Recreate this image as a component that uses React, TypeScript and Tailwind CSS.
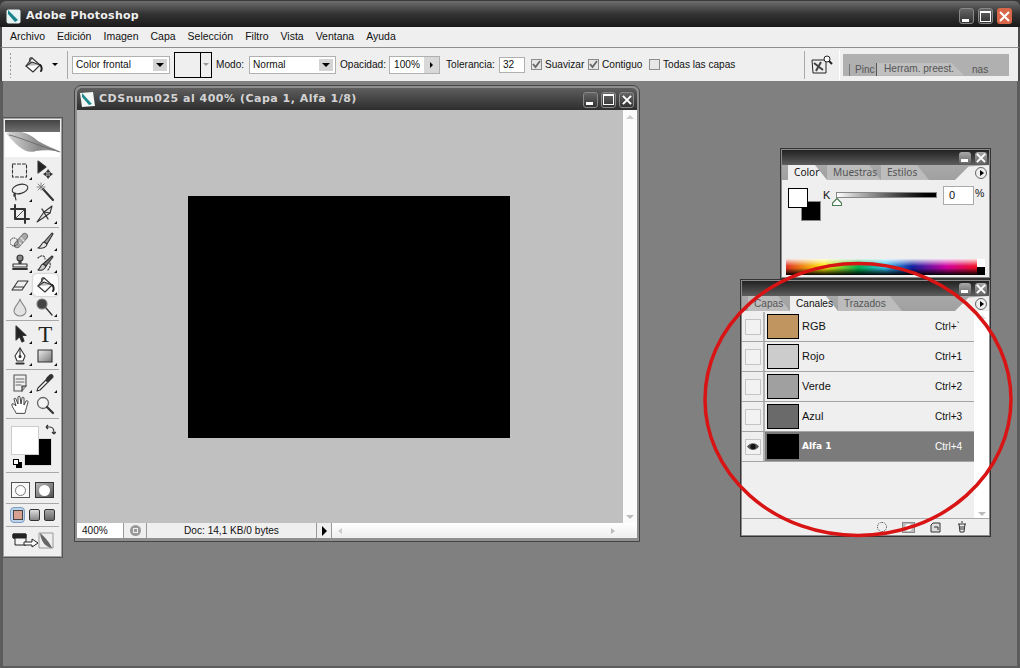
import React from "react";

const F = "font-['Liberation_Sans',Arial,sans-serif]";
const B = "font-['DejaVu_Sans',Verdana,sans-serif] font-bold";

const Ic = ({ children, s = 20 }: { children: React.ReactNode; s?: number }) => (
  <svg width={s} height={s} viewBox="0 0 20 20" fill="none" stroke="#333" strokeWidth="1.1" strokeLinejoin="round" strokeLinecap="round">
    {children}
  </svg>
);

const Bucket = () => (
  <>
    <path d="M9 3 L17 10 L10 17 L3 11 Z" fill="#fff" />
    <path d="M3 11 L9 7 L17 10" fill="#bbb" />
    <path d="M9 3 C7 2 6 4 7 7" />
    <path d="M17 10 C19 11 19 15 18 16" stroke="#222" strokeWidth="2" />
  </>
);

const icons: Record<string, React.ReactNode> = {
  marquee: <rect x="2.5" y="4" width="14" height="13" strokeDasharray="3 2" />,
  move: (
    <>
      <path d="M3 1 V13 L11 7 Z" fill="#222" />
      <path d="M13 10 V18 M9 14 H17 M13 10 l-1.5 2 h3 Z M13 18 l-1.5 -2 h3 Z M9 14 l2 -1.5 v3 Z M17 14 l-2 -1.5 v3 Z" fill="#222" strokeWidth="0.8" />
    </>
  ),
  lasso: (
    <>
      <ellipse cx="10" cy="7" rx="8" ry="4.5" transform="rotate(-15 10 7)" />
      <path d="M5 11 C3 13 4 15 5 14 C6 13 5 12 4 12 M5 14 L6 18" />
    </>
  ),
  wand: (
    <>
      <path d="M8 7 L18 18" strokeWidth="2.2" stroke="#333" />
      <path d="M6 1 V8 M2 5 H10 M3 2 L9 8 M9 2 L3 8" stroke="#777" strokeWidth="0.9" />
    </>
  ),
  crop: (
    <>
      <path d="M5 1 V15 H19 M1 5 H15 V19" strokeWidth="2" stroke="#333" />
      <path d="M6 14 L14 6" strokeWidth="0.9" />
    </>
  ),
  slice: (
    <>
      <path d="M2 18 L9 8 L17 2 L15 9 L8 14 Z" fill="#e6e6e6" />
      <path d="M9 8 L15 9" />
      <path d="M7 5 L13 15" strokeWidth="1.3" />
    </>
  ),
  heal: (
    <>
      <path d="M5 13 L13 4 C15 2 19 5 17 8 L9 17 C6 19 3 16 5 13 Z" fill="#aaa" transform="translate(0 -1)" stroke="#777" />
      <path d="M8 10 l1 1 M11 7 l1 1 M10 12 l1 1 M13 9 l1 1" stroke="#eee" />
      <circle cx="4" cy="11" r="4" strokeDasharray="1 1.3" strokeWidth="0.9" />
    </>
  ),
  brush: (
    <>
      <path d="M9 11 L17 2 L18 3 L12 13 Z" fill="#999" />
      <path d="M9 11 C6 12 7 15 3 17 C8 18 12 16 12 13 Z" fill="#e4e4e4" />
    </>
  ),
  stamp: (
    <>
      <circle cx="10" cy="5" r="3" fill="#888" />
      <path d="M9 8 H11 V11 H9 Z" fill="#555" />
      <path d="M3 11 H17 V14 H3 Z" fill="#eee" />
      <path d="M3 16 H17" strokeWidth="1.8" />
    </>
  ),
  hbrush: (
    <>
      <path d="M8 11 L17 3 L18 4 L11 13 Z" fill="#777" />
      <path d="M8 11 C5 12 6 15 3 17 C7 18 10 16 11 13 Z" fill="#ccc" />
      <path d="M3 5 C7 1 10 3 10 6 M15 10 C16 13 14 16 12 18" strokeDasharray="1.5 1.5" />
    </>
  ),
  eraser: <path d="M2 15 L8 6 H18 L12 15 Z M2 15 L4 12 H14 L12 15" fill="#eee" />,
  bucket: <Bucket />,
  drop: <path d="M10 2 C9 7 4 9 4 14 A6 5 0 0 0 16 14 C16 9 11 7 10 2 Z" fill="#e2e2e2" stroke="#888" />,
  burn: (
    <>
      <circle cx="7" cy="7" r="5" fill="#444" stroke="#777" />
      <path d="M11 11 L17 18" strokeWidth="1.3" />
    </>
  ),
  arrow: <path d="M6 2 V16 L9.5 12.5 L12 18 L14 17 L12 11.5 L16 11.5 Z" fill="#222" />,
  pen: (
    <>
      <path d="M10 2 L15 10 L13 15 H7 L5 10 Z" fill="#fff" />
      <path d="M10 2 V10" />
      <circle cx="10" cy="10.5" r="1" fill="#222" />
      <path d="M6.5 17.5 H13.5" strokeWidth="2.2" />
    </>
  ),
  rect: (
    <>
      <defs>
        <linearGradient id="rg" x1="0" y1="0" x2="1" y2="1">
          <stop offset="0" stopColor="#eee" />
          <stop offset="1" stopColor="#777" />
        </linearGradient>
      </defs>
      <rect x="3" y="4" width="14" height="12" fill="url(#rg)" />
    </>
  ),
  notes: (
    <>
      <path d="M4 2 H16 V13 L12 18 H4 Z" fill="#eee" stroke="#555" />
      <path d="M6 6 H14 M6 9 H14 M6 12 H11" stroke="#666" />
      <path d="M12 18 V13 H16" fill="#aaa" />
    </>
  ),
  dropper: (
    <>
      <path d="M2 18 L3 15 L11 7 L13 9 L5 17 Z" fill="#fff" />
      <path d="M11 7 L13 9 L15 7 L18 4 C18 2 17 1 15 2 L12 5 Z" fill="#333" />
    </>
  ),
  hand: (
    <path
      d="M6 18 C5 15 1 11 2 9 C3 8 5 10 6 11 L4 4 C4 3 6 3 6 4 L8 9 L8 2 C8 1 10 1 10 2 L11 9 L12 3 C12 2 14 2 14 3 L14 10 L16 6 C17 5 18 6 18 7 C17 11 16 14 15 18 Z"
      fill="#fff"
      strokeWidth="0.9"
    />
  ),
  zoom: (
    <>
      <circle cx="8" cy="8" r="5.5" fill="#f4f4f4" stroke="#666" strokeWidth="1.3" />
      <path d="M12 12 L18 18" strokeWidth="2.2" />
    </>
  ),
};

const Tool = ({ name, mark = true, active = false }: { name: string; mark?: boolean; active?: boolean }) => (
  <div className={`relative flex h-[22px] items-center justify-center rounded-sm ${active ? "bg-[#fafafa] shadow-[0_0_2px_#999]" : ""}`}>
    {name === "type" ? (
      <span className="font-['Liberation_Serif',serif] text-[23px] leading-none text-[#222]">T</span>
    ) : (
      <Ic>{icons[name]}</Ic>
    )}
    {mark && <span className="absolute bottom-[1px] right-[1px] h-0 w-0 border-b-[3px] border-l-[3px] border-b-[#111] border-l-transparent" />}
  </div>
);

const Sep = () => <div className="mx-[1px] my-[2px] h-px bg-[#a8a8a8]" />;

const Rows = ({ rows }: { rows: [string, boolean?, boolean?][] }) => (
  <div className="grid grid-cols-2 px-[2px]">
    {rows.map(([n, m, a], i) => (
      <Tool key={i} name={n} mark={m !== false} active={!!a} />
    ))}
  </div>
);

const Toolbox = () => (
  <div className="absolute left-[2px] top-[36px] flex h-[441px] w-[61px] flex-col border border-[#555] bg-[#efefef] outline outline-1 -outline-offset-2 outline-[#a0a0a0] p-[2px]">
    <div className="h-[12px] shrink-0 bg-linear-to-b from-[#444] to-[#707070]" />
    <div className="relative h-[25px] shrink-0 overflow-hidden bg-white">
      <svg width="57" height="25" viewBox="0 0 57 25">
        <defs>
          <linearGradient id="fe" x1="0" y1="0" x2="1" y2="0">
            <stop offset="0" stopColor="#d8d8d8" />
            <stop offset="0.6" stopColor="#8a8a8a" />
            <stop offset="1" stopColor="#999" />
          </linearGradient>
        </defs>
        <path d="M1 1 C14 -3 24 1 33 9 C42 14 50 17 56 20 C44 18 38 18 31 19 C20 23 10 12 1 1 Z" fill="url(#fe)" />
        <path d="M4 3 C14 5 26 11 55 20" stroke="#666" fill="none" strokeWidth="0.9" />
      </svg>
    </div>
    <div className="h-[2px] shrink-0" />
    <Rows rows={[["marquee"], ["move", false], ["lasso"], ["wand", false], ["crop", false], ["slice"]]} />
    <Sep />
    <Rows rows={[["heal"], ["brush"], ["stamp"], ["hbrush"], ["eraser"], ["bucket", true, true], ["drop"], ["burn"]]} />
    <Sep />
    <Rows rows={[["arrow"], ["type"], ["pen"], ["rect"]]} />
    <Sep />
    <Rows rows={[["notes"], ["dropper"], ["hand", false], ["zoom", false]]} />
    <Sep />
    <div className="relative h-[49px] shrink-0">
      <div className="absolute left-[19px] top-[17px] h-[28px] w-[28px] border border-[#ddd] bg-black" />
      <div className="absolute left-[6px] top-[5px] h-[29px] w-[28px] border border-[#ccc] bg-white" />
      <svg className="absolute left-[39px] top-[3px]" width="12" height="12" viewBox="0 0 12 12" fill="none" stroke="#333" strokeWidth="1.2">
        <path d="M2 3 H6 C9 3 10 5 10 9 M2 3 l2 -2 M2 3 l2 2 M10 10 l-2 -2 M10 10 l2 -2" />
      </svg>
      <div className="absolute left-[11px] top-[41px] h-[6px] w-[6px] border border-black bg-black" />
      <div className="absolute left-[8px] top-[38px] h-[6px] w-[6px] border border-black bg-white" />
    </div>
    <Sep />
    <div className="flex h-[26px] shrink-0 items-center justify-center gap-[5px] pt-[4px]">
      <div className="flex h-[16px] w-[19px] items-center justify-center border border-[#555] bg-[#f8f8f8]">
        <span className="h-[11px] w-[11px] rounded-full border border-[#777] bg-white" />
      </div>
      <div className="flex h-[16px] w-[19px] items-center justify-center border border-[#333] bg-linear-to-br from-[#bbb] to-[#555]">
        <span className="h-[11px] w-[11px] rounded-full bg-white" />
      </div>
    </div>
    <Sep />
    <div className="flex h-[18px] shrink-0 items-center justify-center gap-[4px]">
      <div className="flex h-[16px] w-[15px] items-center justify-center rounded-sm border border-[#7b9cc4] bg-[#bcd3ea]">
        <span className="h-[10px] w-[10px] border border-[#444] bg-[#d8a090]" />
      </div>
      <div className="h-[12px] w-[11px] rounded-[2px] border border-[#333] bg-linear-to-b from-[#ddd] to-[#888]" />
      <div className="h-[12px] w-[11px] rounded-[2px] border border-[#333] bg-linear-to-b from-[#aaa] to-[#666]" />
    </div>
    <Sep />
    <div className="flex h-[22px] shrink-0 items-center justify-center">
      <svg width="44" height="20" viewBox="0 0 44 20" fill="none" stroke="#222">
        <path d="M2 4 H15 V15 H4 V8 H2 Z" fill="#f4f4f4" />
        <path d="M2 4 H15 V8 H2 Z" fill="#222" />
        <path d="M13 12 H21 V9 L27 13 L21 17 V15 H13 Z" fill="#fff" />
        <path d="M28 3 H42 V18 H28 Z" fill="#eee" stroke="#999" />
        <path d="M29 3 C33 6 39 13 41 18 C34 17 30 11 29 3 Z" fill="#666" stroke="none" />
      </svg>
    </div>
  </div>
);

const WinBtn = ({ kind, bare }: { kind: "min" | "max" | "close"; bare?: boolean }) => (
  <div
    className={`flex items-center justify-center rounded-[3px] ${
      bare ? "h-[12px] w-[12px] bg-linear-to-b from-[#aaa] to-[#666]" : "h-[16px] w-[15px] border border-[#888] bg-linear-to-b from-[#666] to-[#333]"
    }`}
  >
    {kind === "min" && <span className={`h-[3px] w-[7px] bg-white ${bare ? "mt-[6px] mr-[1px]" : "mt-[8px] mr-[3px]"}`} />}
    {kind === "max" && <span className="h-[11px] w-[11px] border border-white border-t-[2px]" />}
    {kind === "close" && (
      <svg width="10" height="10" viewBox="0 0 11 11" stroke="#fff" strokeWidth="2.2">
        <path d="M1 1 L10 10 M10 1 L1 10" />
      </svg>
    )}
  </div>
);

const Tab = ({ label, active, w }: { label: string; active?: boolean; w: number }) => (
  <div style={{ width: w }} className="relative flex h-[15px] shrink-0 items-center pl-[6px] text-[10.1px]">
    <div className={`absolute inset-0 [clip-path:polygon(0_0,calc(100%-12px)_0,100%_100%,0_100%)] ${active ? "bg-[#efefef]" : "bg-[#bcbcbc]"}`} />
    <span className={`relative whitespace-nowrap ${active ? "text-[#111]" : "text-[#555]"}`}>{label}</span>
  </div>
);

const PanelTabs = ({ tabs, pad }: { tabs: [string, boolean, number][]; pad: number }) => (
  <div className="relative flex h-[15px] shrink-0 items-end bg-linear-to-b from-[#a8a8a8] to-[#a0a0a0]" style={{ paddingLeft: pad }}>
    {tabs.map(([l, a, w]) => (
      <Tab key={l} label={l} active={a} w={w} />
    ))}
    <div className="absolute bottom-0 right-0 h-[15px] w-[34px] bg-[#efefef] [clip-path:polygon(0_100%,40%_10%,100%_0,100%_100%)]" />
    <div className="absolute bottom-[1px] right-[2px] flex h-[12px] w-[12px] items-center justify-center rounded-full border border-[#666] bg-[#eee]">
      <span className="ml-[1px] h-0 w-0 border-y-[3px] border-l-[4px] border-y-transparent border-l-black" />
    </div>
  </div>
);

const PanelTitle = () => (
  <div className="flex h-[15px] shrink-0 items-center justify-end gap-[4px] bg-linear-to-b from-[#222] to-[#5e5e5e] pr-[2px]">
    <WinBtn kind="min" bare />
    <WinBtn kind="close" bare />
  </div>
);

const ColorPanel = () => (
  <div className="absolute left-[780px] top-[67px] flex h-[131px] w-[211px] flex-col border border-[#333] bg-[#8a8a8a] p-[1px]">
    <PanelTitle />
    <PanelTabs
      pad={6}
      tabs={[
        ["Color", true, 39],
        ["Muestras", false, 54],
        ["Estilos", false, 48],
      ]}
    />
    <div className={`relative flex-1 bg-[#efefef] ${F}`}>
      <div className="absolute left-[6px] top-[8px] flex">
        <div className="relative h-[33px] w-[33px]">
          <div className="absolute left-[13px] top-[13px] h-[20px] w-[20px] border border-[#888] bg-black" />
          <div className="absolute left-0 top-0 h-[20px] w-[20px] border border-black bg-white" />
        </div>
      </div>
      <span className="absolute left-[41px] top-[7px] text-[11px] text-[#111]">K</span>
      <div className="absolute left-[54px] top-[12px] h-[6px] w-[101px] border border-[#888] bg-linear-to-r from-white to-black" />
      <svg className="absolute left-[50px] top-[18px]" width="10" height="8" viewBox="0 0 10 8">
        <path d="M5 .5 L9.5 5 V7.5 H.5 V5 Z" fill="#fff" stroke="#4c7c55" strokeWidth="1.2" />
      </svg>
      <div className="absolute left-[161px] top-[6px] flex h-[19px] w-[31px] items-center border border-[#aaa] bg-white pl-[5px] text-[11px] text-[#111]">0</div>
      <span className="absolute left-[193px] top-[6px] text-[10.5px] text-[#111]">%</span>
      <div className="absolute bottom-[2px] left-[4px] flex h-[16px] w-[199px]">
        <div className="flex-1 bg-[linear-gradient(to_bottom,rgba(255,255,255,.85),rgba(255,255,255,0)_45%,rgba(0,0,0,0)_55%,rgba(0,0,0,1)),linear-gradient(to_right,#e03020,#ffee00_20%,#00b050_38%,#30c0f0_52%,#1020a0_66%,#d000a0_84%,#f01020)]" />
        <div className="flex w-[8px] flex-col">
          <div className="flex-1 bg-white" />
          <div className="flex-1 bg-black" />
        </div>
      </div>
    </div>
  </div>
);

const channels: [string, string, string, boolean?][] = [
  ["RGB", "Ctrl+`", "#c09560"],
  ["Rojo", "Ctrl+1", "#cccccc"],
  ["Verde", "Ctrl+2", "#a0a0a0"],
  ["Azul", "Ctrl+3", "#6a6a6a"],
  ["Alfa 1", "Ctrl+4", "#000000", true],
];

const ChannelsPanel = () => (
  <div className={`absolute left-[740px] top-[198px] flex h-[258px] w-[251px] flex-col border border-[#333] bg-[#8a8a8a] p-[1px] ${F}`}>
    <PanelTitle />
    <PanelTabs
      pad={6}
      tabs={[
        ["Capas", false, 42],
        ["Canales", true, 48],
        ["Trazados", false, 64],
      ]}
    />
    <div className="flex min-h-0 flex-1 bg-[#efefef]">
      <div className="flex min-w-0 flex-1 flex-col pt-[1px]">
        {channels.map(([n, k, c, sel]) => (
          <div key={n} className={`flex h-[30px] shrink-0 items-center border-b border-[#a4a4a4] ${sel ? "bg-[#7b7b7b] text-white" : "text-[#111]"}`}>
            <div className="flex h-full w-[23px] shrink-0 items-center justify-center border-r-2 border-[#b4b4b4] bg-[#efefef]">
              <div className="flex h-[16px] w-[16px] items-center justify-center border border-[#c4c4c4] bg-[#f2f2f2]">
                {sel && (
                  <svg width="12" height="9" viewBox="0 0 12 9">
                    <path d="M0 4.5 C3 0 9 0 12 4.5 C9 9 3 9 0 4.5 Z" fill="#555" />
                    <circle cx="6" cy="4.5" r="2.6" fill="#111" />
                  </svg>
                )}
              </div>
            </div>
            <div className="ml-[2px] h-[25px] w-[32px] shrink-0 border border-black" style={{ backgroundColor: c }} />
            <span className={`ml-[3px] w-[133px] shrink-0 ${sel ? B + " text-[9px]" : "text-[11px]"}`}>{n}</span>
            <span className="text-[10.1px]">{k}</span>
          </div>
        ))}
      </div>
      <div className="flex w-[15px] shrink-0 flex-col items-center justify-between bg-white pb-[2px] pt-[4px]">
        <span className="h-0 w-0 border-x-[4px] border-b-[4px] border-x-transparent border-b-[#ddd]" />
        <span className="h-0 w-0 border-x-[4px] border-t-[4px] border-x-transparent border-t-[#bbb]" />
      </div>
    </div>
    <div className="flex h-[17px] shrink-0 items-center justify-end gap-[15px] border-t border-[#aaa] bg-[#efefef] pr-[21px]">
      <span className="h-[10px] w-[10px] rounded-full border border-dotted border-[#444]" />
      <span className="flex h-[11px] w-[13px] items-center justify-center border border-[#888] bg-[#bbb]">
        <span className="h-[7px] w-[7px] rounded-full bg-white" />
      </span>
      <svg width="11" height="11" viewBox="0 0 11 11" fill="#ddd" stroke="#333"><path d="M3 1 H10 V10 H1 V3 Z" /><path d="M4 5 H8 V8" fill="none" /></svg>
      <svg width="12" height="12" viewBox="0 0 12 12" fill="#eee" stroke="#333"><path d="M2 3 H10 M3 3 L4 11 H8 L9 3 M5 1 H7 M5 5 V9 M7 5 V9" /></svg>
    </div>
  </div>
);

const DocWindow = () => (
  <div className="absolute left-[74px] top-[4px] flex h-[457px] w-[566px] flex-col rounded-t-[7px] border border-[#444] bg-[#8f8f8f] p-[2px] pb-[3px]">
    <div className="flex h-[22px] shrink-0 items-center rounded-t-[5px] bg-linear-to-b from-[#5e5e5e] to-[#2e2e2e] pl-[2px] pr-[3px] pt-[1px]">
      <svg width="17" height="17" viewBox="0 0 17 17">
        <path d="M1 2 L14 1 L16 15 L3 16 Z" fill="#f4f8f4" />
        <path d="M3 2 L13 13 L10 14 L3 6 Z" fill="#1f8a8f" />
      </svg>
      <span className={`ml-[3px] flex-1 whitespace-nowrap text-[11px] tracking-[.5px] text-[#d4d4d4] ${B}`}>CDSnum025 al 400% (Capa 1, Alfa 1/8)</span>
      <div className="flex gap-[3px]">
        <WinBtn kind="min" />
        <WinBtn kind="max" />
        <WinBtn kind="close" />
      </div>
    </div>
    <div className="flex min-h-0 flex-1">
      <div className="flex flex-1 items-center justify-center bg-[#c0c0c0] pr-[2px]">
        <div className="h-[242px] w-[322px] bg-black" />
      </div>
      <div className="flex w-[14px] shrink-0 flex-col items-center justify-between bg-[#fbfbfb] pb-[4px] pt-[5px]">
        <span className="h-0 w-0 border-x-[4px] border-b-[4px] border-x-transparent border-b-[#ccc]" />
        <span className="h-0 w-0 border-x-[4px] border-t-[4px] border-x-transparent border-t-[#bbb]" />
      </div>
    </div>
    <div className={`flex h-[15px] shrink-0 bg-[#efefef] text-[10.1px] text-[#111] ${F}`}>
      <div className="flex w-[47px] items-center border-r border-[#999] bg-white pl-[5px]">400%</div>
      <div className="flex w-[23px] items-center justify-center border-r border-[#999]">
        <span className="flex h-[11px] w-[11px] items-center justify-center rounded-full bg-[#999]">
          <span className="h-[5px] w-[5px] border border-[#eee]" />
        </span>
      </div>
      <div className="flex w-[170px] items-center justify-center border-r border-[#999]">Doc: 14,1 KB/0 bytes</div>
      <div className="flex w-[15px] items-center justify-center border-r border-[#999]">
        <span className="h-0 w-0 border-y-[5px] border-l-[5px] border-y-transparent border-l-black" />
      </div>
      <div className="flex flex-1 items-center justify-between bg-linear-to-b from-[#fff] to-[#eee] px-[6px]">
        <span className="h-0 w-0 border-y-[3px] border-r-[4px] border-y-transparent border-r-[#ccc]" />
        <span className="mr-[16px] h-0 w-0 border-y-[3px] border-l-[4px] border-y-transparent border-l-[#bbb]" />
      </div>
    </div>
  </div>
);

const Select = ({ label, w, ml }: { label: string; w: number; ml: number }) => (
  <div style={{ width: w, marginLeft: ml }} className="flex h-[18px] shrink-0 items-center justify-between border border-[#b0b0b0] bg-white pl-[3px] pr-[2px]">
    <span>{label}</span>
    <span className="flex h-[12px] w-[14px] items-center justify-center bg-[#d4d4d4]">
      <span className="h-0 w-0 border-x-[4px] border-t-[4px] border-x-transparent border-t-black" />
    </span>
  </div>
);

const Check = ({ label, on, w }: { label: string; on?: boolean; w: number }) => (
  <div className="flex shrink-0 items-center" style={{ width: w }}>
    <span className="flex h-[11px] w-[11px] shrink-0 items-center justify-center border border-[#8c8c8c] bg-[#e6e6e6]">
      {on && (
        <svg width="9" height="9" viewBox="0 0 9 9" fill="none" stroke="#666" strokeWidth="1.8">
          <path d="M1 4 L3.5 7 L8 1" />
        </svg>
      )}
    </span>
    <span className="ml-[3px] whitespace-nowrap">{label}</span>
  </div>
);

const OptionsBar = () => (
  <div className={`flex h-[34px] shrink-0 items-center border-x-2 border-t border-x-[#4a4a4a] border-t-[#8e8e8e] bg-[#efefef] pl-[7px] text-[10.1px] text-[#111] ${F}`}>
    <div className="h-[26px] w-[3px] shrink-0 bg-[radial-gradient(#999_1px,transparent_1px)] bg-[length:3px_4px]" />
    <div className="ml-[11px] shrink-0">
      <Ic><Bucket /></Ic>
    </div>
    <span className="ml-[9px] h-0 w-0 shrink-0 border-x-[3px] border-t-[3px] border-x-transparent border-t-black" />
    <div className="ml-[9px] h-[28px] w-px shrink-0 bg-[#aaa]" />
    <Select label="Color frontal" w={98} ml={4} />
    <div className="ml-[4px] flex h-[26px] w-[38px] shrink-0 border border-black">
      <div className="w-[26px] border-r border-black" />
      <div className="flex flex-1 items-center justify-center">
        <span className="h-0 w-0 border-x-[3px] border-t-[3px] border-x-transparent border-t-[#999]" />
      </div>
    </div>
    <span className="ml-[4px] w-[29px] shrink-0">Modo:</span>
    <Select label="Normal" w={87} ml={4} />
    <span className="ml-[4px] w-[46px] shrink-0">Opacidad:</span>
    <div className="ml-[3px] flex h-[18px] w-[51px] shrink-0 border border-[#b0b0b0]">
      <div className="flex flex-1 items-center justify-center bg-white">100%</div>
      <div className="flex w-[15px] items-center justify-center bg-[#d8d8d8]">
        <span className="h-0 w-0 border-y-[3px] border-l-[3px] border-y-transparent border-l-black" />
      </div>
    </div>
    <span className="ml-[6px] w-[49px] shrink-0">Tolerancia:</span>
    <div className="ml-[4px] flex h-[16px] w-[26px] shrink-0 items-center border border-[#b0b0b0] bg-white pl-[3px]">32</div>
    <div className="w-[6px] shrink-0" />
    <Check label="Suavizar" on w={57} />
    <Check label="Contiguo" on w={61} />
    <Check label="Todas las capas" w={82} />
    <div className="flex-1" />
    <div className="h-[28px] w-px shrink-0 bg-[#aaa]" />
    <div className="ml-[6px] shrink-0">
      <svg width="22" height="20" viewBox="0 0 22 20" fill="none" stroke="#222">
        <path d="M1 5 H15 V18 H2 Z" fill="#eee" />
        <path d="M3 8 L12 15 M10 7 L5 16" strokeWidth="2" stroke="#444" />
        <circle cx="16" cy="4" r="3" fill="#fff" />
        <path d="M18 6 L21 9" strokeWidth="2" />
      </svg>
    </div>
    <div className="ml-[6px] h-[30px] w-px shrink-0 bg-white" />
    <div className="ml-[3px] mr-[9px] flex h-[22px] w-[166px] shrink-0 items-end bg-[#b0b0b0] text-[#555]">
      <div className="ml-[6px] flex h-[12px] w-[27px] items-center border-l border-[#777] pl-[5px]">Pinc</div>
      <div className="relative flex h-[13px] w-[88px] items-center border-l border-[#555] pl-[7px]">
        <div className="absolute inset-0 bg-[#c0c0c0] [clip-path:polygon(0_0,85%_0,100%_100%,0_100%)]" />
        <span className="relative whitespace-nowrap">Herram. preest.</span>
      </div>
      <div className="flex h-[12px] items-center pl-[8px]">nas</div>
    </div>
  </div>
);

const menu = ["Archivo", "Edición", "Imagen", "Capa", "Selección", "Filtro", "Vista", "Ventana", "Ayuda"];

export default function App() {
  return (
    <div className="relative flex h-[668px] w-[1020px] flex-col overflow-hidden bg-[#3a3a3a] pt-[1px]">
      <div className="flex h-[26px] shrink-0 items-center rounded-t-[6px] bg-linear-to-b from-[#6e6e6e] via-[#333] to-[#1a1a1a] pl-[6px] pr-[8px] pt-[4px]">
        <svg width="15" height="15" viewBox="0 0 15 15">
          <rect x="0.5" y="0.5" width="14" height="14" rx="2" fill="#e8f2f2" />
          <path d="M2 1 L12 11 L9 13 L2 5 Z" fill="#16828c" />
        </svg>
        <span className={`ml-[5px] flex-1 text-[11px] tracking-[.25px] text-[#f0f0f0] ${B}`}>Adobe Photoshop</span>
        <div className="flex gap-[4px]">
          <WinBtn kind="min" />
          <WinBtn kind="max" />
          <div className="flex h-[16px] w-[15px] items-center justify-center rounded-[3px] bg-[#d8674a]">
            <svg width="11" height="11" viewBox="0 0 11 11" stroke="#fff" strokeWidth="2">
              <path d="M1 1 L10 10 M10 1 L1 10" />
            </svg>
          </div>
        </div>
      </div>
      <div className={`flex h-[20px] shrink-0 items-center gap-[12px] border-x-2 border-[#4a4a4a] bg-[#efefef] pl-[8px] text-[10.5px] text-[#111] ${F}`}>
        {menu.map((m) => (
          <span key={m}>{m}</span>
        ))}
      </div>
      <OptionsBar />
      <div className="relative min-h-0 flex-1 border-x-[3px] border-b-[2px] border-x-[#5c5c5c] border-b-[#5c5c5c] bg-[#808080]">
        <div className="absolute -left-[3px] top-0 h-[585px] w-[1020px]">
          <DocWindow />
          <Toolbox />
          <ColorPanel />
          <ChannelsPanel />
          <svg className="pointer-events-none absolute left-[695px] top-[170px]" width="325" height="296" viewBox="695 251 325 296" fill="none">
            <ellipse cx="858" cy="399.5" rx="153" ry="136" stroke="#d81414" strokeWidth="3.5" />
          </svg>
        </div>
      </div>
    </div>
  );
}
